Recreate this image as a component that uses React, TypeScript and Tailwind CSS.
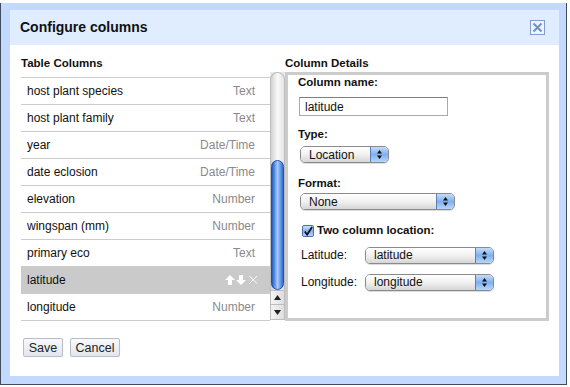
import React from "react";

const rows = [
  { name: "host plant species", type: "Text" },
  { name: "host plant family", type: "Text" },
  { name: "year", type: "Date/Time" },
  { name: "date eclosion", type: "Date/Time" },
  { name: "elevation", type: "Number" },
  { name: "wingspan (mm)", type: "Number" },
  { name: "primary eco", type: "Text" },
  { name: "latitude", type: "", selected: true },
  { name: "longitude", type: "Number" },
];

function UpDown() {
  return (
    <svg width="7" height="11" viewBox="0 0 7 11">
      <polygon points="3.5,1 6,4.5 1,4.5" fill="#111" />
      <polygon points="3.5,10 6,6.5 1,6.5" fill="#111" />
    </svg>
  );
}

function AquaSelect({ value, width }: { value: string; width: string }) {
  return (
    <div
      className={`${width} h-[17px] flex rounded-[5px] border border-[#8a8a8a] overflow-hidden shadow-[0_1px_1px_rgba(0,0,0,0.15)]`}
    >
      <div className="flex-1 flex items-center pl-[8px] text-[12px] text-[#111] bg-gradient-to-b from-white via-[#f1f1f1] to-[#d6d6d6]">
        {value}
      </div>
      <div className="w-[18px] flex items-center justify-center border-l border-[#5d7fb8] bg-gradient-to-b from-[#c4dcfb] via-[#7fb0ee] to-[#b7d6fb]">
        <UpDown />
      </div>
    </div>
  );
}

function RowIcons() {
  return (
    <div className="flex items-center gap-[1px]">
      <svg width="10" height="10" viewBox="0 0 10 10">
        <polygon points="5,0 10,5 7,5 7,10 3,10 3,5 0,5" fill="#fff" />
      </svg>
      <svg width="10" height="10" viewBox="0 0 10 10">
        <polygon points="5,10 10,5 7,5 7,0 3,0 3,5 0,5" fill="#fff" />
      </svg>
      <svg width="10" height="10" viewBox="0 0 10 10" className="ml-[1px]">
        <path d="M1.5 1 L9 8.5 M9 1 L1.5 8.5" stroke="#fff" strokeWidth="1" />
      </svg>
    </div>
  );
}

function Scrollbar() {
  return (
    <div className="w-[15px] h-[248px] flex flex-col bg-[#e9e9e9]">
      <div className="h-[88px] rounded-t-full border border-b-0 border-[#bdbdbd] bg-gradient-to-r from-[#d2d2d2] via-[#fafafa] to-[#e4e4e4]" />
      <div className="h-[130px] border-x border-[#bdbdbd] bg-gradient-to-r from-[#d2d2d2] via-[#fafafa] to-[#e4e4e4] flex">
        <div className="flex-1 rounded-full border border-[#1d4fae] bg-gradient-to-r from-[#1f56c6] via-[#a6cdf9] to-[#3069d4]" />
      </div>
      <div className="h-[15px] flex items-center justify-center border border-[#bdbdbd] bg-gradient-to-r from-[#f4f4f4] to-[#dedede]">
        <svg width="7" height="5" viewBox="0 0 7 5">
          <polygon points="3.5,0 7,5 0,5" fill="#222" />
        </svg>
      </div>
      <div className="h-[15px] flex items-center justify-center border border-t-0 border-[#bdbdbd] bg-gradient-to-r from-[#f4f4f4] to-[#dedede]">
        <svg width="7" height="5" viewBox="0 0 7 5">
          <polygon points="0,0 7,0 3.5,5" fill="#222" />
        </svg>
      </div>
    </div>
  );
}

export default function App() {
  return (
    <div className="w-[570px] h-[387px] bg-white overflow-hidden font-['Liberation_Sans',Arial,sans-serif] text-[#111]">
      <div className="mt-[3px] w-[567px] h-[382px] bg-[#c3d9ff] border border-t-0 border-[#3f4c5e] pl-[9px] pr-[7px] pt-[7px] pb-[8px] flex flex-col">
        {/* Title */}
        <div className="h-[35px] bg-[#e0ecff] flex items-center justify-between pl-[10px] pr-[14px]">
          <span className="text-[14px] font-bold">Configure columns</span>
          <div className="w-[15px] h-[15px] border border-[#7e9ed2] bg-[#eef4ff] flex items-center justify-center">
            <svg width="11" height="11" viewBox="0 0 11 11">
              <path d="M1.5 1.5 L9.5 9.5 M9.5 1.5 L1.5 9.5" stroke="#6f8fc6" strokeWidth="2" />
            </svg>
          </div>
        </div>

        {/* Body */}
        <div className="flex-1 bg-white pl-[11px] pt-[11px]">
          <div className="flex">
            {/* Left */}
            <div className="w-[264px]">
              <div className="h-[14px] leading-[14px] text-[11.5px] font-bold">Table Columns</div>
              <div className="mt-[2px] flex">
                <div className="w-[249px] h-[249px] pt-[5px]">
                  <div className="border-b border-[#cccccc]">
                    {rows.map((r) => (
                      <div
                        key={r.name}
                        className={`h-[27px] border-t border-[#cccccc] flex items-center justify-between pl-[6px] ${
                          r.selected ? "bg-[#cacaca] pr-[12px]" : "pr-[15px]"
                        }`}
                      >
                        <span className="text-[12px]">{r.name}</span>
                        {r.selected ? (
                          <RowIcons />
                        ) : (
                          <span className="text-[12px] text-[#8a8a8a]">{r.type}</span>
                        )}
                      </div>
                    ))}
                  </div>
                </div>
                <Scrollbar />
              </div>
            </div>

            {/* Right */}
            <div className="w-[264px]">
              <div className="h-[14px] leading-[14px] text-[11.5px] font-bold">Column Details</div>
              <div className="mt-[2px] h-[249px] border-[3px] border-[#cccccc] pl-[10px]">
                <div className="h-[14px] leading-[14px] text-[11.5px] font-bold">Column name:</div>
                <div className="mt-[8px] ml-[1px] w-[149px] h-[19px] border border-[#a9a9a9] border-t-[#7f7f7f] flex items-center pl-[5px] text-[12px]">
                  latitude
                </div>
                <div className="mt-[11px] h-[14px] leading-[14px] text-[11.5px] font-bold">Type:</div>
                <div className="mt-[5px] ml-[2px]">
                  <AquaSelect value="Location" width="w-[89px]" />
                </div>
                <div className="mt-[13px] h-[14px] leading-[14px] text-[11.5px] font-bold">Format:</div>
                <div className="mt-[3px] ml-[2px]">
                  <AquaSelect value="None" width="w-[155px]" />
                </div>
                <div className="mt-[14px] ml-[4px] h-[14px] flex items-center gap-[3px]">
                  <div className="w-[12px] h-[12px] rounded-[2px] border border-[#4d6fa6] bg-gradient-to-b from-[#cfe2fb] via-[#7fb0ee] to-[#b8d6fb] flex items-center justify-center">
                    <svg width="11" height="11" viewBox="0 0 11 11">
                      <path d="M2 5.5 L4.5 9 L10 0.5" stroke="#111" strokeWidth="2" fill="none" />
                    </svg>
                  </div>
                  <span className="text-[11.5px] font-bold">Two column location:</span>
                </div>
                <div className="mt-[8px] ml-[3px] flex items-center">
                  <span className="w-[64px] text-[12px]">Latitude:</span>
                  <AquaSelect value="latitude" width="w-[129px]" />
                </div>
                <div className="mt-[9px] ml-[3px] flex items-center">
                  <span className="w-[64px] text-[12px]">Longitude:</span>
                  <AquaSelect value="longitude" width="w-[129px]" />
                </div>
              </div>
            </div>
          </div>

          {/* Buttons */}
          <div className="mt-[17px] ml-[2px] flex gap-[7px]">
            <button className="w-[40px] h-[19px] rounded-[2px] border border-[#b6bdc9] bg-gradient-to-b from-[#f8f9fb] to-[#e2e6ec] text-[12.5px] text-[#222]">
              Save
            </button>
            <button className="w-[50px] h-[19px] rounded-[2px] border border-[#b6bdc9] bg-gradient-to-b from-[#f8f9fb] to-[#e2e6ec] text-[12.5px] text-[#222]">
              Cancel
            </button>
          </div>
        </div>
      </div>
    </div>
  );
}
